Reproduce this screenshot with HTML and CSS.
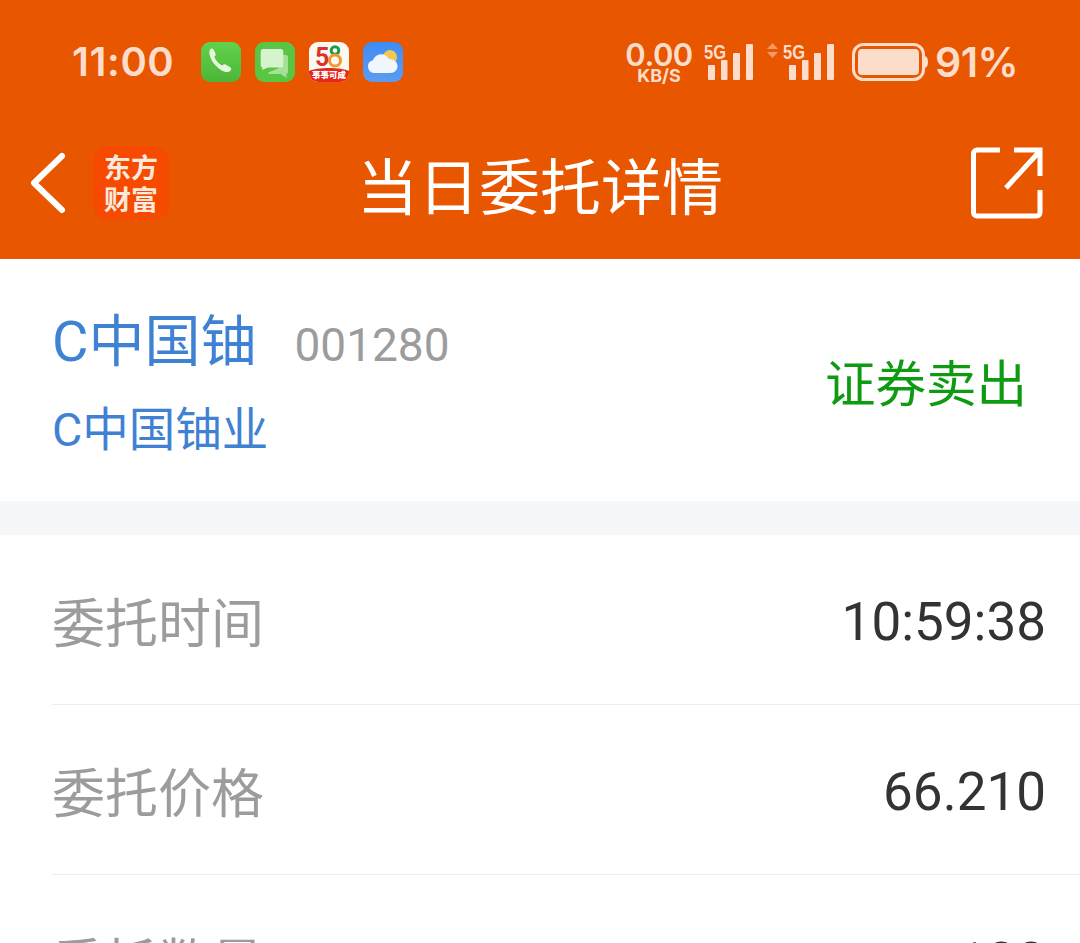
FILE: index.html
```html
<!DOCTYPE html>
<html lang="zh-CN">
<head>
<meta charset="utf-8">
<title>当日委托详情</title>
<link rel="stylesheet" href="styles.css">
</head>
<body>
<div class="page">
  <header class="top">
    <div class="status">
      <span class="time">11:00</span>
      <div class="apps">
        <svg class="app" viewBox="0 0 40 40"><defs><linearGradient id="gp" x1="0" y1="0" x2="0" y2="1"><stop offset="0" stop-color="#62d24c"/><stop offset="1" stop-color="#4db538"/></linearGradient><linearGradient id="gw" x1="0" y1="0" x2="0" y2="1"><stop offset="0" stop-color="#3f8bf5"/><stop offset="1" stop-color="#5b9cf0"/></linearGradient></defs><rect width="40" height="40" rx="9" fill="url(#gp)"/><path d="M9 7.500c1.500-1.500 3-1 3.700.5l1.800 3.600c.5 1.200.1 2.200-1.200 3.200 1 3 4.500 7.500 8 8.700 1.200-1.200 2.300-1.500 3.600-.8l4.300 2.500c1.400.8 1.400 2.400.3 3.500-2.400 2.100-5.800 1.600-9.500-.8-5.800-3.700-10-9.500-11.300-15-.5-2.200-.2-4.200.3-5.400z" fill="#e6f9df"/></svg>
        <svg class="app" viewBox="0 0 40 40"><rect width="40" height="40" rx="9" fill="#59c543"/><path d="M24 13h7c1.200 0 2 .8 2 2v15c0 1-.7 1.800-1.800 2l.8 4-6.500-4H15c-1 0-1.700-.6-1.900-1.500L24 26z" fill="#a5e097"/><path d="M8 7h18c1.300 0 2.300 1 2.300 2.300v14c0 1.300-1 2.300-2.300 2.300H13L7 28l.5-2.500c-1-.2-1.800-1.100-1.800-2.200V9.300C5.700 8 6.700 7 8 7z" fill="#d5f3cd"/></svg>
        <svg class="app" viewBox="0 0 40 40"><rect width="40" height="40" rx="9" fill="#fdf8f2"/><path d="M0 29c8-4 32-4 40 0v2a9 9 0 0 1-9 9H9a9 9 0 0 1-9-9z" fill="#e8261d"/><text class="fifty" x="6" y="24" fill="#d8332c">5</text><circle cx="26" cy="8.500" r="3.800" fill="none" stroke="#1d9c4c" stroke-width="3"/><circle cx="26" cy="18.500" r="5.500" fill="none" stroke="#ef9a2c" stroke-width="3"/><text class="slogan" x="20" y="36" text-anchor="middle" fill="#fff">事事可成</text></svg>
        <svg class="app" viewBox="0 0 40 40"><rect width="40" height="40" rx="9" fill="url(#gw)"/><circle cx="27" cy="15" r="7" fill="#f2c850"/><path d="M11 31a6.500 6.500 0 0 1-1-12.800C13 11 22 10 26 17c5 0 8.500 3 8.500 7s-3 7-7 7z" fill="#f0f6fe"/></svg>
      </div>
      <div class="indicators">
        <div class="speed"><b>0.00</b><small>KB/S</small></div>
        <svg class="sig" viewBox="0 0 52 40"><text class="net" x="0" y="17" textLength="22" lengthAdjust="spacingAndGlyphs">5G</text><rect x="4" y="23" width="7" height="15" rx="1"/><rect x="17" y="18" width="6.500" height="20" rx="1"/><rect x="29" y="11" width="7" height="27" rx="1"/><rect x="42" y="2" width="7" height="36" rx="1"/></svg>
        <svg class="sig sig2" viewBox="0 0 68 40"><path class="arrows" d="M0 7l5.500-6L11 7zM0 10l5.500 6L11 10z"/><text class="net" x="16" y="17" textLength="22" lengthAdjust="spacingAndGlyphs">5G</text><rect x="22" y="23" width="7" height="15" rx="1"/><rect x="35" y="18" width="6.500" height="20" rx="1"/><rect x="47" y="11" width="7" height="27" rx="1"/><rect x="60" y="2" width="7" height="36" rx="1"/></svg>
        <svg class="batt" viewBox="0 0 76 38"><rect x="1.500" y="1.500" width="70" height="35" rx="10" fill="none" stroke="#fcdccb" stroke-width="3"/><rect x="6" y="6" width="61" height="26" rx="4" fill="#fcdccb"/><path d="M73 13c2 .5 3 3 3 6s-1 5.500-3 6z" fill="#fcdccb"/></svg>
        <span class="pct">91%</span>
      </div>
    </div>
    <nav class="nav">
      <svg class="back" viewBox="0 0 36 62"><path d="M32 4 4 31l28 27" fill="none" stroke="#fff" stroke-width="6" stroke-linecap="round" stroke-linejoin="round"/></svg>
      <div class="logo"><span>东方</span><span>财富</span></div>
      <h1 class="title">当日委托详情</h1>
      <svg class="share" viewBox="0 0 72 72"><path d="M29 3H6a3.500 3.500 0 0 0-3.500 3.500v59A3.500 3.500 0 0 0 6 69h59.500a3.500 3.500 0 0 0 3.500-3.500V43M35 41 68 5M43 3h26v26" fill="none" stroke="#fff" stroke-width="5" stroke-linejoin="miter"/></svg>
    </nav>
  </header>
  <section class="stock">
    <div class="names">
      <div class="line1"><span class="short">C中国铀</span><span class="code">001280</span></div>
      <div class="full">C中国铀业</div>
    </div>
    <div class="action">证券卖出</div>
  </section>
  <div class="gap"></div>
  <section class="rows">
    <div class="row"><span class="label">委托时间</span><span class="value">10:59:38</span></div>
    <div class="row"><span class="label">委托价格</span><span class="value">66.210</span></div>
    <div class="row"><span class="label">委托数量</span><span class="value">100</span></div>
  </section>
</div>
</body>
</html>
```
FILE: styles.css
```css
html, body { margin: 0; padding: 0; background: #fff; }
body { width: 1080px; height: 943px; overflow: hidden; font-family: Roboto, "Noto Sans CJK SC", sans-serif; }
.page { width: 1080px; height: 943px; overflow: hidden; }
.top { height: 259px; background: #e85600; display: flex; flex-direction: column; }
.status { height: 124px; display: flex; align-items: center; padding: 0 62px 0 72px; box-sizing: border-box; color: #fcdccb; }
.time { font: 600 40px/1 Inter, sans-serif; letter-spacing: .6px; width: 129px; }
.apps { display: flex; gap: 14px; }
.app { width: 40px; height: 40px; display: block; }
.fifty { font: 700 25px Roboto, sans-serif; }
.slogan { font: 900 8.500px "Noto Sans CJK SC", sans-serif; }
.indicators { margin-left: auto; display: flex; align-items: center; color: #fcdccb; }
.speed { display: flex; flex-direction: column; align-items: center; width: 66px; margin-top: 2px; }
.speed b { font: 600 31px/26px Inter, sans-serif; letter-spacing: -.5px; }
.speed small { font: 700 18px/16px Inter, sans-serif; }
.sig { width: 52px; height: 40px; margin-left: 12px; fill: #fcdccb; }
.sig2 { width: 68px; margin-left: 11px; }
.arrows { fill: #f59a66; }
.net { font: 700 20px "Liberation Sans", sans-serif; fill: #fcdccb; }
.batt { width: 76px; height: 38px; margin-left: 17px; }
.pct { font: 600 41px/1 Inter, sans-serif; letter-spacing: -.6px; margin-left: 7px; }
.nav { height: 135px; display: flex; align-items: center; padding: 0 37px 18px 30px; box-sizing: border-box; position: relative; }
.back { width: 36px; height: 62px; display: block; }
.logo { width: 76px; height: 74px; margin-left: 27px; background: #f64a00; border-radius: 15px; display: flex; flex-direction: column; align-items: center; justify-content: center; color: #fde9dc; font: 700 27px/32px "Noto Sans CJK SC", sans-serif; }
.logo span { display: block; }
.title { position: absolute; left: 0; right: 0; top: -8px; margin: 0; text-align: center; color: #fff; font: 400 61px/135px "Noto Sans CJK SC", sans-serif; pointer-events: none; }
.share { width: 72px; height: 72px; margin-left: auto; display: block; }
.stock { height: 242px; display: flex; align-items: center; justify-content: space-between; padding: 0 53px 0 52px; box-sizing: border-box; }
.names { color: #3f82d4; margin-top: 5px; }
.line1 { display: flex; align-items: baseline; height: 78px; }
.short { font: 400 56px/78px Roboto, "Noto Sans CJK SC", sans-serif; }
.code { margin-left: 38px; font: 400 46px/78px Roboto, sans-serif; color: #9c9c9c; }
.full { margin-top: 17px; font: 400 46.500px/64px Roboto, "Noto Sans CJK SC", sans-serif; }
.action { color: #0f9b11; font: 400 50.500px/60px "Noto Sans CJK SC", sans-serif; }
.gap { height: 34px; background: #f6f7f9; }
.row { height: 170px; display: flex; align-items: center; justify-content: space-between; margin-left: 52px; padding-right: 34px; border-bottom: 1px solid #ececee; box-sizing: border-box; }
.label { font: 400 53px/1.2 "Noto Sans CJK SC", sans-serif; color: #9c9c9c; position: relative; top: 1px; }
.value { font: 400 53px/1.2 Roboto, sans-serif; color: #333; position: relative; top: 3px; }
```
